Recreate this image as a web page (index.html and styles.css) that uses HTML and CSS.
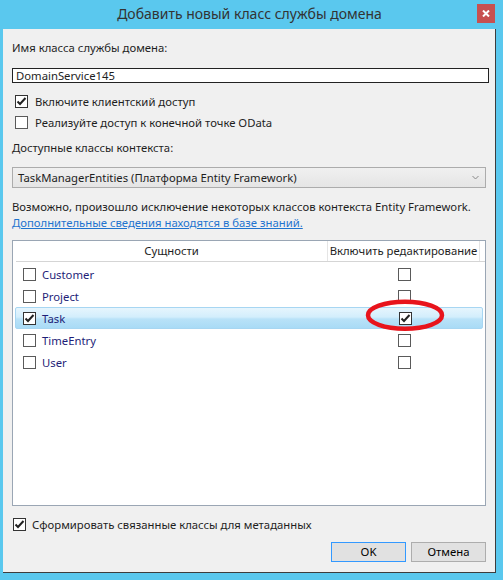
FILE: index.html
```html
<!DOCTYPE html>
<html lang="ru">
<head>
    <meta charset="UTF-8">
    <title>Добавить новый класс службы домена</title>
    <link rel="stylesheet" href="styles.css">
</head>
<body>
<div class="window">
    <div class="titlebar">
        <div class="title">Добавить новый класс службы домена</div>
        <div class="close">
            <svg width="8" height="7" viewBox="0 0 8 7"><path d="M1 0.5 L7 6.5 M7 0.5 L1 6.5" stroke="#fff" stroke-width="2"/></svg>
        </div>
    </div>

    <div class="panel">
        <div class="label">Имя класса службы домена:</div>
        <div class="textbox">DomainService145</div>

        <div class="check-row first-check">
            <span class="cb checked"><svg width="11" height="11" viewBox="0 0 11 11"><path d="M1.5 5.5 L4 8 L9.5 2" fill="none" stroke="#222" stroke-width="2"/></svg></span>
            Включите клиентский доступ
        </div>
        <div class="check-row">
            <span class="cb"></span>
            Реализуйте доступ к конечной точке OData
        </div>

        <div class="label label-ctx">Доступные классы контекста:</div>
        <div class="combo">
            <span>TaskManagerEntities (Платформа Entity Framework)</span>
            <svg width="7" height="5" viewBox="0 0 7 5"><path d="M0.5 1 L3.5 4 L6.5 1" fill="none" stroke="#888" stroke-width="1"/></svg>
        </div>

        <div class="note">Возможно, произошло исключение некоторых классов контекста Entity Framework.</div>
        <div class="link">Дополнительные сведения находятся в базе знаний.</div>

        <div class="grid">
            <div class="grid-head">
                <div class="head-cell">Сущности</div>
                <div class="head-cell">Включить редактирование</div>
            </div>

            <div class="row">
                <div class="cell-name"><span class="cb"></span>Customer</div>
                <div class="cell-edit"><span class="cb"></span></div>
            </div>
            <div class="row">
                <div class="cell-name"><span class="cb"></span>Project</div>
                <div class="cell-edit"><span class="cb"></span></div>
            </div>
            <div class="row selected">
                <div class="cell-name"><span class="cb checked"><svg width="11" height="11" viewBox="0 0 11 11"><path d="M1.5 5.5 L4 8 L9.5 2" fill="none" stroke="#222" stroke-width="2"/></svg></span>Task</div>
                <div class="cell-edit">
                    <span class="cb checked"><svg width="11" height="11" viewBox="0 0 11 11"><path d="M1.5 5.5 L4 8 L9.5 2" fill="none" stroke="#222" stroke-width="2"/></svg></span>
                    <!-- red mark drawn over the checkbox -->
                    <svg class="mark" width="82" height="34" viewBox="0 0 82 34"><ellipse cx="41" cy="17" rx="37" ry="13.5" fill="none" stroke="#E8141C" stroke-width="4.5"/></svg>
                </div>
            </div>
            <div class="row">
                <div class="cell-name"><span class="cb"></span>TimeEntry</div>
                <div class="cell-edit"><span class="cb"></span></div>
            </div>
            <div class="row">
                <div class="cell-name"><span class="cb"></span>User</div>
                <div class="cell-edit"><span class="cb"></span></div>
            </div>
        </div>

        <div class="check-row meta-check">
            <span class="cb checked"><svg width="11" height="11" viewBox="0 0 11 11"><path d="M1.5 5.5 L4 8 L9.5 2" fill="none" stroke="#222" stroke-width="2"/></svg></span>
            Сформировать связанные классы для метаданных
        </div>

        <div class="buttons">
            <div class="btn btn-default">OK</div>
            <div class="btn">Отмена</div>
        </div>
    </div>
</div>
</body>
</html>
```

FILE: styles.css
```css
* {
    box-sizing: border-box;
}

body {
    margin: 0;
    font-family: "Segoe UI", "Noto Sans", sans-serif;
    font-size: 11.3px;
    color: #1e1e1e;
}

.window {
    width: 503px;
    height: 580px;
    background-color: #5AC8EE;
    display: flex;
    flex-direction: column;
}

.titlebar {
    height: 29px;
    flex: none;
    display: flex;
    align-items: flex-start;
    padding-left: 22px;
}
.title {
    flex: 1;
    text-align: center;
    font-size: 14px;
    line-height: 27px;
    color: #333;
}
.close {
    width: 18px;
    height: 19px;
    margin-top: 4px;
    margin-right: 8px;
    background-color: #C75050;
    display: flex;
    align-items: center;
    justify-content: center;
}

.panel {
    height: 544px;
    flex: none;
    margin: 0 7px 7px 3px;
    background-color: #F0F0F0;
    border-right: 1px solid #3d3d3d;
    border-bottom: 1px solid #3d3d3d;
    padding: 11px 9px 0 9px;
}

.label {
    height: 16px;
    line-height: 16px;
    white-space: nowrap;
}
.label-ctx {
    margin-top: 7px;
}

.textbox {
    margin-top: 12px;
    margin-right: -3px;
    height: 15px;
    line-height: 13px;
    border: 1px solid #222;
    background: #fff;
    padding-left: 3px;
}

.check-row {
    display: flex;
    align-items: center;
    height: 21px;
    padding-left: 3px;
    gap: 7px;
    white-space: nowrap;
}
.first-check {
    margin-top: 8px;
}
.meta-check {
    margin-top: 8px;
    padding-left: 1px;
    gap: 6px;
}

.cb {
    width: 13px;
    height: 13px;
    flex: none;
    border: 1px solid #5a5a5a;
    background: #fff;
    display: inline-flex;
    align-items: center;
    justify-content: center;
}
.cb.checked {
    border-color: #333;
}

.combo {
    margin-top: 11px;
    height: 21px;
    border: 1px solid #ACACAC;
    background: linear-gradient(#F0F0F0, #E5E5E5);
    display: flex;
    align-items: center;
    justify-content: space-between;
    padding: 0 6px 0 5px;
}

.note {
    margin-top: 11px;
    height: 16px;
    line-height: 16px;
    white-space: nowrap;
}
.link {
    height: 16px;
    line-height: 16px;
    color: #1F74CF;
    text-decoration: underline;
}

.grid {
    margin-top: 9px;
    height: 266px;
    border: 1px solid #9AA6B4;
    background: #fff;
}
.grid-head {
    display: grid;
    grid-template-columns: 312px 152px;
    height: 21px;
    margin-left: 3px;
    border-bottom: 1px solid #D5D5D5;
}
.head-cell {
    text-align: center;
    line-height: 20px;
    white-space: nowrap;
    border-right: 1px solid #E5E5E5;
}

.row {
    display: grid;
    grid-template-columns: 313px 152px;
    height: 22px;
    width: 468px;
    margin-left: 2px;
    align-items: center;
    color: #1E1E78;
}
.grid-head + .row {
    margin-top: 1px;
}
.row.selected {
    border: 1px solid #A7D6F2;
    border-radius: 2px;
    background: linear-gradient(#E6F5FD, #D3EEFC 45%, #B9E2F8 55%, #A9DBF6);
}
.cell-name {
    display: flex;
    align-items: center;
    gap: 6px;
    padding-left: 8px;
}
.selected .cell-name {
    padding-left: 7px;
}
.cell-edit {
    display: flex;
    justify-content: center;
    position: relative;
}
.mark {
    position: absolute;
    left: 50%;
    top: 50%;
    transform: translate(-50%, -58%);
}

.buttons {
    margin-top: 7px;
    display: flex;
    justify-content: flex-end;
    gap: 5px;
}
.btn {
    width: 75px;
    height: 20px;
    border: 1px solid #ADADAD;
    background: #E1E1E1;
    text-align: center;
    line-height: 18px;
    color: #000;
}
.btn-default {
    border-color: #3399FF;
}
```
